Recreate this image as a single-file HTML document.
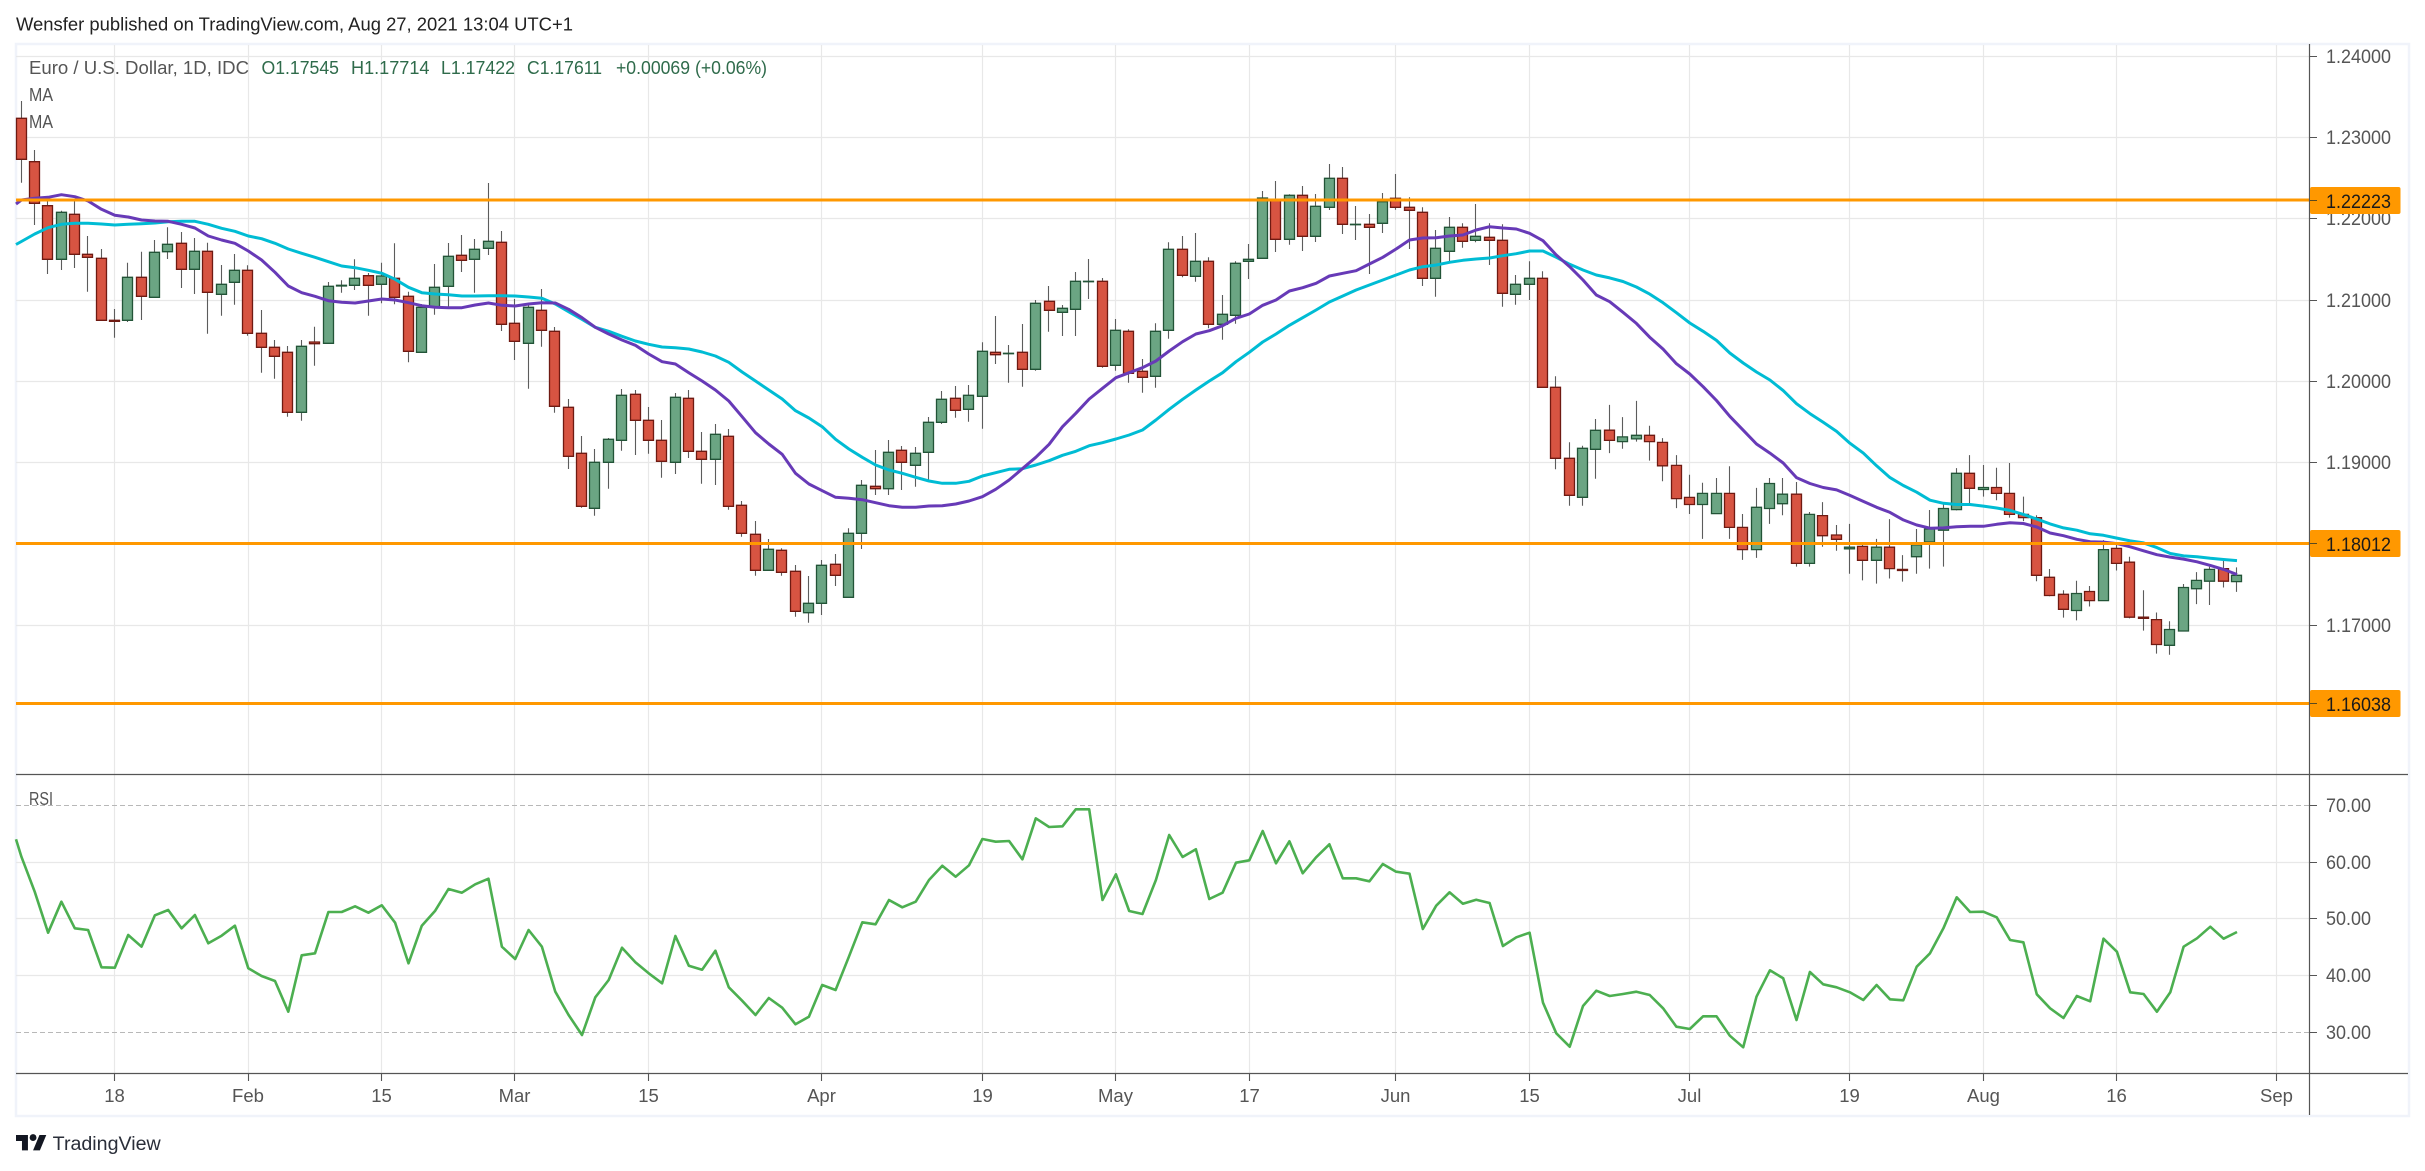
<!DOCTYPE html>
<html lang="en">
<head>
<meta charset="utf-8">
<title>Euro / U.S. Dollar, 1D, IDC</title>
<style>
html,body{margin:0;padding:0;background:#fff;width:2425px;height:1171px;overflow:hidden}
svg{display:block;position:absolute;left:0;top:0}
text{font-family:"Liberation Sans",sans-serif;font-size:18.5px;fill:#555}
.ax{font-size:19px}
.t{font-size:18.5px;text-anchor:middle}
.g{fill:#2f6b4b}
.lb{fill:#1a1a1a;font-size:19px}
</style>
</head>
<body>
<svg width="2425" height="1171" viewBox="0 0 2425 1171" xmlns="http://www.w3.org/2000/svg">
<rect width="2425" height="1171" fill="#fff"/>
<text x="16" y="30.5" textLength="557" lengthAdjust="spacingAndGlyphs" style="fill:#222">Wensfer published on TradingView.com, Aug 27, 2021 13:04 UTC+1</text>

<!-- frame -->
<rect x="16" y="44" width="2393" height="1072" fill="#fff" stroke="#f0f3fa" stroke-width="2.5"/>

<!-- grid -->
<path d="M114.5 45V1073M248.5 45V1073M381.5 45V1073M514.5 45V1073M648.5 45V1073M821.5 45V1073M982.5 45V1073M1115.5 45V1073M1249.5 45V1073M1395.5 45V1073M1529.5 45V1073M1689.5 45V1073M1849.5 45V1073M1983.5 45V1073M2116.5 45V1073M2276.5 45V1073" stroke="#e8e8e8" stroke-width="1.2" fill="none"/>
<path d="M16 56.5H2309M16 137.5H2309M16 218.5H2309M16 300.5H2309M16 381.5H2309M16 462.5H2309M16 625.5H2309M16 862.5H2309M16 918.5H2309M16 975.5H2309" stroke="#e8e8e8" stroke-width="1.2" fill="none"/>
<path d="M16 805.5H2309M16 1032.5H2309" stroke="#b8b8b8" stroke-width="1.1" stroke-dasharray="5 3" fill="none"/>

<!-- wicks -->
<path stroke="#5c5c5c" stroke-width="1.1" fill="none" d="M21.5 101V182.7M34.5 150V225M47.5 197V274M61.5 210.7V270M74.5 200V268M87.5 236V291.7M101.5 249V320.3M114.5 309V337.7M127.5 262.7V322M141.5 251.7V320M154.5 240V297.3M167.5 227.3V259M181.5 232V288M194.5 238V294M207.5 242.7V333.7M221.5 265V315.7M234.5 254V304.7M247.5 265.3V335.7M261.5 310V372.7M274.5 340V378.7M287.5 346V416.7M301.5 340V420.7M314.5 326.7V365.7M328.5 282V343.3M341.5 280.3V292.7M354.5 259.3V290M368.5 273V315.7M381.5 262.7V303.3M394.5 243.3V304.3M408.5 291.7V362.3M421.5 304V352.3M434.5 264V314.7M448.5 243V306.7M461.5 235V272M474.5 239V292.7M488.5 183V255M501.5 231V331M514.5 299V360M528.5 303.3V388.7M541.5 289V346.7M554.5 327V412.7M568.5 399V469M581.5 436V507.7M594.5 449V515.7M608.5 438V488.7M621.5 389V450.7M635.5 390V455M648.5 407V453.7M661.5 420V477.7M675.5 393V474M688.5 390V458M701.5 432V483.7M715.5 424V485M728.5 429V509.7M741.5 501V536.7M755.5 521V575.7M768.5 539V570.3M781.5 548.3V575.7M795.5 565V616.7M808.5 576V622.7M821.5 560V615M835.5 554V586M848.5 528.3V597.3M861.5 480V549M875.5 450V495M888.5 440V495M901.5 446V490M915.5 447V486.7M928.5 417V480M941.5 391V424M955.5 386V417.7M968.5 385V421.7M982.5 342.3V428.7M995.5 316V364M1008.5 345V382.7M1022.5 324V386.7M1035.5 300V370.7M1048.5 286V331.7M1062.5 305V336M1075.5 272V336M1088.5 259V299M1102.5 278V367.7M1115.5 319V370.7M1128.5 329.3V382.7M1142.5 359V392.7M1155.5 323.3V387.7M1168.5 242.3V338.7M1182.5 236V277.3M1195.5 233V281.7M1208.5 257.3V328.3M1222.5 295V339.7M1235.5 261.3V323.7M1248.5 244V279M1262.5 191V258.3M1275.5 181V252M1289.5 194.3V244.7M1302.5 186V251M1315.5 194V242M1329.5 164V210M1342.5 167V234M1355.5 206V240M1369.5 214V274M1382.5 193V233M1395.5 174V209.7M1409.5 197.3V249M1422.5 207.3V286M1435.5 230V296.7M1449.5 217V261.7M1462.5 223.3V247.7M1475.5 204V242.3M1489.5 223.3V265M1502.5 224.3V306.7M1515.5 275V304.7M1529.5 261.3V300M1542.5 271.3V387.3M1555.5 376.3V469.3M1569.5 442.3V505.7M1582.5 445.7V505.7M1595.5 419V478.7M1609.5 404.9V453.1M1622.5 417.1V448.8M1636.5 400.9V441.6M1649.5 425.8V460.6M1662.5 438.1V481.2M1676.5 455.1V508.1M1689.5 474.8V514M1702.5 482.8V538.9M1716.5 478V513.6M1729.5 466.2V538.9M1742.5 514V559.9M1756.5 487.9V557.9M1769.5 478V523.9M1782.5 478V515.2M1796.5 482V566.6M1809.5 512V566.6M1822.5 502.1V546.8M1836.5 525V550.8M1849.5 523.9V573.7M1862.5 542V580.4M1876.5 538.9V583.6M1889.5 519.1V578.5M1902.5 555.1V581.6M1916.5 529V573.7M1929.5 510V568.6M1943.5 503.3V566.6M1956.5 468.1V510.4M1969.5 455.1V503.3M1983.5 465V496.6M1996.5 467.7V500.2M2009.5 463V517.6M2023.5 496.6V521.1M2036.5 515.2V581.2M2049.5 569V596.2M2063.5 590.3V617.6M2076.5 580.8V620.4M2089.5 586V606.5M2103.5 540.1V600.6M2116.5 544.8V570.5M2129.5 556.7V618.4M2143.5 590.3V630.6M2156.5 612.5V653.6M2169.5 621.2V654.8M2183.5 584V631M2196.5 572.1V604.1M2209.5 566.6V605M2223.5 561V587.5M2236.5 567.4V591.9"/>

<!-- green bodies -->
<path fill="#6ba583" stroke="#225437" stroke-width="1.3" d="M56.5 212.3h10V259.3h-10zM122.5 277.3h10V320.3h-10zM149.5 252.3h10V297.3h-10zM162.5 244.3h10V251.7h-10zM189.5 251.3h10V269.3h-10zM216.5 284.3h10V294.3h-10zM229.5 270.3h10V282.3h-10zM296.5 346.3h10V412.3h-10zM323.5 286.3h10V343.3h-10zM336.5 285.3h10V286h-10zM349.5 278.3h10V285.3h-10zM376.5 276h10V284.3h-10zM416.5 307.3h10V352.3h-10zM429.5 287.3h10V307.3h-10zM443.5 256.3h10V286.3h-10zM469.5 249.3h10V259.3h-10zM483.5 241.3h10V248.3h-10zM523.5 307.3h10V343.3h-10zM589.5 462.3h10V508.3h-10zM603.5 439.3h10V462.3h-10zM616.5 395.3h10V440.3h-10zM670.5 397.3h10V462.3h-10zM710.5 434.3h10V459.3h-10zM763.5 549.3h10V570.3h-10zM803.5 603.3h10V612.7h-10zM816.5 565.3h10V603.3h-10zM843.5 533.3h10V597.3h-10zM856.5 485.3h10V533.3h-10zM883.5 452.3h10V488.7h-10zM910.5 453.3h10V465.3h-10zM923.5 422.3h10V452.3h-10zM936.5 399.3h10V422.3h-10zM963.5 395.3h10V409.3h-10zM977.5 351.3h10V396.3h-10zM1003.5 353.3h10V353.7h-10zM1030.5 303.3h10V369.3h-10zM1057.5 308.3h10V312.3h-10zM1070.5 281.3h10V309.3h-10zM1083.5 281.3h10V281.7h-10zM1110.5 330.3h10V365.3h-10zM1150.5 331.3h10V376.3h-10zM1163.5 249.3h10V330.3h-10zM1190.5 261.3h10V276.3h-10zM1217.5 314.3h10V324.3h-10zM1230.5 263.3h10V315.3h-10zM1243.5 259.3h10V261.3h-10zM1257.5 198h10V258.3h-10zM1284.5 195.3h10V239.3h-10zM1310.5 206.3h10V236.3h-10zM1324.5 178.3h10V207.3h-10zM1350.5 224.3h10V224.7h-10zM1377.5 201.7h10V223.3h-10zM1430.5 248.3h10V278.3h-10zM1444.5 227.3h10V251.3h-10zM1470.5 236.3h10V240.3h-10zM1510.5 284.3h10V294.3h-10zM1524.5 278.3h10V284.3h-10zM1577.5 448.3h10V497.3h-10zM1590.5 430.3h10V449.3h-10zM1617.5 436.9h10V441.6h-10zM1631.5 435.3h10V438.9h-10zM1697.5 493.4h10V504.5h-10zM1711.5 493.4h10V513.6h-10zM1751.5 507.3h10V549.6h-10zM1764.5 483.5h10V508.5h-10zM1777.5 494.2h10V503.7h-10zM1804.5 514.4h10V563.4h-10zM1844.5 547.2h10V548.8h-10zM1871.5 547.2h10V560.3h-10zM1911.5 544.8h10V556.7h-10zM1924.5 529h10V542h-10zM1938.5 508.5h10V530.2h-10zM1951.5 473.3h10V509.6h-10zM1978.5 487.5h10V489.5h-10zM2071.5 593.5h10V610.5h-10zM2098.5 549.6h10V600.6h-10zM2164.5 629.5h10V645.3h-10zM2178.5 587.5h10V631h-10zM2191.5 580.4h10V588.7h-10zM2204.5 569.4h10V581.2h-10zM2231.5 575.3h10V581.6h-10z"/>

<!-- red bodies -->
<path fill="#d75442" stroke="#6f1a12" stroke-width="1.3" d="M16.5 118.3h10V159.3h-10zM29.5 161.7h10V203.3h-10zM42.5 205.7h10V259.3h-10zM69.5 214.3h10V254.3h-10zM82.5 254.3h10V257.3h-10zM96.5 258.3h10V320.3h-10zM109.5 320.3h10V321.3h-10zM136.5 277.3h10V296.3h-10zM176.5 243.3h10V269.3h-10zM202.5 251.3h10V292.3h-10zM242.5 270.3h10V333.3h-10zM256.5 333.3h10V347.3h-10zM269.5 347.3h10V356.3h-10zM282.5 352.3h10V412.3h-10zM309.5 342h10V343.7h-10zM363.5 275.7h10V285.3h-10zM389.5 278.3h10V297.3h-10zM403.5 296.3h10V351.3h-10zM456.5 255.3h10V260.3h-10zM496.5 242.3h10V324.3h-10zM509.5 323.3h10V341.3h-10zM536.5 310.3h10V330.3h-10zM549.5 331.3h10V406.3h-10zM563.5 407.3h10V456.3h-10zM576.5 453.3h10V506.3h-10zM630.5 394.3h10V420.3h-10zM643.5 420.3h10V440.3h-10zM656.5 440.3h10V461.3h-10zM683.5 398.3h10V451.3h-10zM696.5 451.3h10V459.3h-10zM723.5 436.3h10V506.3h-10zM736.5 505.3h10V533.3h-10zM750.5 534.3h10V570.3h-10zM776.5 550.3h10V572.3h-10zM790.5 571.3h10V611.3h-10zM830.5 564.3h10V575.3h-10zM870.5 486.3h10V488.7h-10zM896.5 450.3h10V462.3h-10zM950.5 398.3h10V410.3h-10zM990.5 352.3h10V354.7h-10zM1017.5 352.3h10V369.3h-10zM1044.5 301.3h10V310.3h-10zM1097.5 281.3h10V366.3h-10zM1123.5 331.3h10V373.3h-10zM1137.5 371.3h10V377.3h-10zM1177.5 249.3h10V275.3h-10zM1203.5 261.3h10V324.3h-10zM1270.5 200h10V239.3h-10zM1297.5 195.3h10V236.3h-10zM1337.5 178.3h10V224.3h-10zM1364.5 224.3h10V227.3h-10zM1390.5 198.3h10V207.3h-10zM1404.5 207.3h10V210.3h-10zM1417.5 212.3h10V278.3h-10zM1457.5 227.3h10V241.3h-10zM1484.5 237.3h10V240.3h-10zM1497.5 240.3h10V293.3h-10zM1537.5 278.3h10V387.3h-10zM1550.5 387.3h10V458.3h-10zM1564.5 458.3h10V495.3h-10zM1604.5 430.2h10V440.4h-10zM1644.5 435.3h10V441.6h-10zM1657.5 442.4h10V465.8h-10zM1671.5 465.4h10V498.6h-10zM1684.5 497.4h10V504.5h-10zM1724.5 493.4h10V527.4h-10zM1737.5 527.4h10V549.6h-10zM1791.5 494.2h10V563.4h-10zM1817.5 515.6h10V535.7h-10zM1831.5 535h10V539.3h-10zM1857.5 546.4h10V560.3h-10zM1884.5 547.2h10V568.6h-10zM1897.5 569.4h10V570.5h-10zM1964.5 473.3h10V488.3h-10zM1991.5 487.5h10V493.4h-10zM2004.5 493.4h10V514.4h-10zM2018.5 514.4h10V517.6h-10zM2031.5 517.6h10V575.3h-10zM2044.5 577.3h10V595.5h-10zM2058.5 594.3h10V609.3h-10zM2084.5 591.5h10V600.6h-10zM2111.5 548.4h10V563.4h-10zM2124.5 562.2h10V617.2h-10zM2138.5 617.2h10V618.4h-10zM2151.5 619.6h10V644.5h-10zM2218.5 568.6h10V581.2h-10z"/>

<!-- MA cyan -->
<polyline fill="none" stroke="#00bcd4" stroke-width="3" stroke-linejoin="round" points="16,244.5 21.4,241.5 34.7,234 48.1,227.7 61.4,224.3 74.8,223.3 88.1,223.3 101.5,224 114.8,225 128.2,224.3 141.5,223.7 154.9,223 168.2,221.7 181.6,221.3 194.9,221.3 208.3,224.3 221.6,228.3 234.9,231.3 248.3,236 261.6,238.7 275,243.3 288.3,249 301.7,253.3 315,257.3 328.4,261.7 341.7,266 355.1,267.7 368.4,270.3 381.8,273.3 395.1,279.3 408.5,287.3 421.8,292.7 435.2,294 448.5,294.7 461.9,296 475.2,296 488.5,295.7 501.9,295.7 515.2,296 528.6,297 541.9,298.3 555.3,304 568.6,311.7 582,319.3 595.3,327.3 608.7,331.3 622,336.3 635.4,341 648.7,344.3 662.1,347 675.4,347.7 688.8,349 702.1,352 715.4,356 728.8,362.3 742.1,372 755.5,381 768.8,390 782.2,399 795.5,410.7 808.9,418 822.2,426.7 835.6,439.3 848.9,449 862.3,457.3 875.6,465 889,470 902.3,473.3 915.7,477.3 929,481 942.3,483.3 955.7,483.3 969,481.3 982.4,476 995.7,472.7 1009.1,469.3 1022.4,468.7 1035.8,465 1049.1,460.7 1062.5,455.3 1075.8,451.3 1089.2,445.7 1102.5,442.7 1115.9,439 1129.2,435 1142.5,430 1155.9,420 1169.2,409.3 1182.6,399.3 1195.9,390 1209.3,381 1222.6,372.7 1236,361.7 1249.3,352.3 1262.7,342 1276,334 1289.4,325.3 1302.7,317.7 1316.1,310 1329.4,302 1342.8,296 1356.1,290 1369.4,285 1382.8,280 1396.1,275 1409.5,270 1422.8,266.7 1436.2,265 1449.5,262.3 1462.9,260.3 1476.2,259 1489.6,258 1502.9,255.7 1516.3,253.7 1529.6,251 1543,251 1556.3,257.3 1569.7,264.3 1583,270 1596.3,275 1609.7,277.9 1623,281.5 1636.4,287 1649.7,294.1 1663.1,302.8 1676.4,312.7 1689.8,323 1703.1,331.3 1716.5,340.4 1729.8,353 1743.2,363 1756.5,372 1769.9,380 1783.2,390.6 1796.5,403.7 1809.9,413.6 1823.2,422.3 1836.6,431.4 1849.9,443.2 1863.3,453.1 1876.6,465.8 1890,477.6 1903.3,485.5 1916.7,492.2 1930,500.2 1943.4,503.3 1956.7,504.5 1970.1,504.5 1983.4,506.1 1996.7,508 2010.1,510.4 2023.4,514.4 2036.8,519.1 2050.1,523.9 2063.5,527.9 2076.8,530.2 2090.2,533.8 2103.5,535.3 2116.9,538.1 2130.2,540.9 2143.6,542.9 2156.9,547.6 2170.3,553.5 2183.6,555.9 2197,556.7 2210.3,558.3 2223.6,559.5 2237,560.6"/>

<!-- MA purple -->
<polyline fill="none" stroke="#673ab7" stroke-width="3" stroke-linejoin="round" points="16,204 21.4,200 34.7,198.3 48.1,197.3 61.4,194.7 74.8,196.7 88.1,201 101.5,209.3 114.8,215.3 128.2,217 141.5,220 154.9,221 168.2,221.3 181.6,224.3 194.9,228 208.3,236 221.6,240 234.9,243.3 248.3,251 261.6,260 275,272.3 288.3,286 301.7,292.7 315,296.3 328.4,300.7 341.7,302.3 355.1,303 368.4,301 381.8,299 395.1,300 408.5,302.7 421.8,305.7 435.2,307.3 448.5,307.7 461.9,307.7 475.2,305 488.5,303 501.9,305.3 515.2,306 528.6,304 541.9,302.7 555.3,303 568.6,309.3 582,317.7 595.3,327.3 608.7,334 622,340 635.4,345.3 648.7,354 662.1,361.7 675.4,364 688.8,372.7 702.1,381 715.4,390 728.8,401 742.1,416.7 755.5,432.7 768.8,444 782.2,454.3 795.5,473.3 808.9,484 822.2,490.7 835.6,497.3 848.9,498.3 862.3,499.7 875.6,502.7 889,505.7 902.3,507.3 915.7,507.3 929,506 942.3,505.7 955.7,504 969,501 982.4,496.7 995.7,489.3 1009.1,480 1022.4,468.7 1035.8,457.3 1049.1,444.3 1062.5,426.7 1075.8,413.3 1089.2,399 1102.5,388.3 1115.9,377.7 1129.2,372.7 1142.5,367.7 1155.9,361 1169.2,351 1182.6,341.7 1195.9,334 1209.3,330.7 1222.6,325.7 1236,318.3 1249.3,314 1262.7,305.3 1276,300 1289.4,291 1302.7,287.7 1316.1,283.3 1329.4,276 1342.8,273.3 1356.1,270.7 1369.4,264 1382.8,257.3 1396.1,249 1409.5,240 1422.8,238 1436.2,237.7 1449.5,236 1462.9,235 1476.2,230 1489.6,226.7 1502.9,228 1516.3,229 1529.6,233.3 1543,240.7 1556.3,255 1569.7,266.7 1583,280 1596.3,295 1609.7,301.7 1623,312.3 1636.4,323.4 1649.7,337.2 1663.1,349.1 1676.4,363.7 1689.8,374 1703.1,386.7 1716.5,400.5 1729.8,416.3 1743.2,430.2 1756.5,444 1769.9,453.1 1783.2,463 1796.5,477.6 1809.9,483.5 1823.2,487.5 1836.6,489.9 1849.9,495.4 1863.3,501.4 1876.6,507.3 1890,512.4 1903.3,519.9 1916.7,525 1930,528.2 1943.4,527.9 1956.7,526.7 1970.1,526.3 1983.4,526.3 1996.7,524.3 2010.1,522.7 2023.4,523.5 2036.8,527 2050.1,533 2063.5,535.7 2076.8,539.3 2090.2,541.7 2103.5,542.1 2116.9,543.6 2130.2,546.8 2143.6,550.8 2156.9,554.7 2170.3,557.1 2183.6,559.1 2197,561.8 2210.3,565.4 2223.6,569.4 2237,574.5"/>

<!-- RSI -->
<polyline fill="none" stroke="#4caf50" stroke-width="2.6" stroke-linejoin="round" points="16,839.3 21.4,856.7 34.7,891.7 48.1,932.7 61.4,901.7 74.8,928.3 88.1,930 101.5,967.3 114.8,967.7 128.2,935 141.5,946.7 154.9,915.3 168.2,910 181.6,928.3 194.9,915 208.3,943.3 221.6,935.7 234.9,925.7 248.3,968.3 261.6,976 275,981 288.3,1011.7 301.7,955.3 315,953.3 328.4,912 341.7,912 355.1,906.3 368.4,912.7 381.8,905.3 395.1,922.7 408.5,963.3 421.8,925.7 435.2,910.7 448.5,889 461.9,892.7 475.2,884.3 488.5,878.7 501.9,946.7 515.2,959 528.6,930 541.9,946.7 555.3,991.7 568.6,1015 582,1035 595.3,997.3 608.7,980 622,947.7 635.4,962.3 648.7,973.3 662.1,983.3 675.4,936 688.8,965.7 702.1,969.7 715.4,950.7 728.8,987.3 742.1,1000.7 755.5,1015 768.8,998 782.2,1007.7 795.5,1024.3 808.9,1016.7 822.2,985 835.6,990 848.9,956.7 862.3,922.3 875.6,924.3 889,900 902.3,907.3 915.7,901.7 929,880 942.3,865.7 955.7,876.7 969,865.3 982.4,839 995.7,841.7 1009.1,841 1022.4,859.3 1035.8,818.3 1049.1,827 1062.5,826.3 1075.8,809.3 1089.2,809.3 1102.5,900 1115.9,874.3 1129.2,911 1142.5,914 1155.9,880 1169.2,835 1182.6,857 1195.9,849.3 1209.3,899 1222.6,892.7 1236,862.7 1249.3,860.3 1262.7,831 1276,863.3 1289.4,841.3 1302.7,873.3 1316.1,857.3 1329.4,844.3 1342.8,878.3 1356.1,878.3 1369.4,881.3 1382.8,864 1396.1,871.7 1409.5,873.7 1422.8,929 1436.2,905.7 1449.5,892.3 1462.9,903.7 1476.2,899.7 1489.6,903 1502.9,946 1516.3,937.3 1529.6,932.7 1543,1002.7 1556.3,1033.3 1569.7,1046.7 1583,1006 1596.3,990.7 1609.7,996 1623,994 1636.4,991.7 1649.7,995 1663.1,1008.3 1676.4,1026.7 1689.8,1029 1703.1,1016.3 1716.5,1016.3 1729.8,1035.7 1743.2,1047.3 1756.5,996.7 1769.9,970.3 1783.2,978.3 1796.5,1020 1809.9,972 1823.2,984.3 1836.6,987.3 1849.9,992.3 1863.3,1000 1876.6,985 1890,999.3 1903.3,1000.3 1916.7,966.7 1930,953.3 1943.4,928.3 1956.7,897.3 1970.1,912 1983.4,911.7 1996.7,917.3 2010.1,940 2023.4,942.3 2036.8,994.3 2050.1,1008.3 2063.5,1018 2076.8,996 2090.2,1001.3 2103.5,938.7 2116.9,951.7 2130.2,992.3 2143.6,994 2156.9,1011.7 2170.3,992.3 2183.6,946.7 2197,938.3 2210.3,926.7 2223.6,938.7 2237,932"/>

<!-- horizontal levels -->
<path d="M16 200H2309M16 543.5H2309M16 703.5H2309" stroke="#ff9800" stroke-width="3" fill="none"/>

<!-- separators and axes -->
<path d="M16 774.5H2408M16 1073.5H2408M2309.5 44V1115" stroke="#555" stroke-width="1.2" fill="none"/>
<path d="M2310 56.5h7M2310 137.5h7M2310 218.5h7M2310 300.5h7M2310 381.5h7M2310 462.5h7M2310 625.5h7M2310 805.5h7M2310 862.5h7M2310 918.5h7M2310 975.5h7M2310 1032.5h7M114.5 1074v7M248.5 1074v7M381.5 1074v7M514.5 1074v7M648.5 1074v7M821.5 1074v7M982.5 1074v7M1115.5 1074v7M1249.5 1074v7M1395.5 1074v7M1529.5 1074v7M1689.5 1074v7M1849.5 1074v7M1983.5 1074v7M2116.5 1074v7M2276.5 1074v7" stroke="#555" stroke-width="1.1" fill="none"/>

<!-- legend -->
<text x="29" y="74" textLength="220" lengthAdjust="spacingAndGlyphs">Euro / U.S. Dollar, 1D, IDC</text>
<text class="g" x="261.5" y="74" textLength="77.5" lengthAdjust="spacingAndGlyphs">O1.17545</text>
<text class="g" x="351" y="74" textLength="78.5" lengthAdjust="spacingAndGlyphs">H1.17714</text>
<text class="g" x="441" y="74" textLength="74" lengthAdjust="spacingAndGlyphs">L1.17422</text>
<text class="g" x="527" y="74" textLength="75" lengthAdjust="spacingAndGlyphs">C1.17611</text>
<text class="g" x="616" y="74" textLength="151" lengthAdjust="spacingAndGlyphs">+0.00069 (+0.06%)</text>
<text x="29" y="101" textLength="24" lengthAdjust="spacingAndGlyphs">MA</text>
<text x="29" y="128" textLength="24" lengthAdjust="spacingAndGlyphs">MA</text>
<text x="29" y="805" textLength="24" lengthAdjust="spacingAndGlyphs">RSI</text>

<!-- price scale -->
<g class="ax">
<text class="ax" x="2326" y="63" textLength="65" lengthAdjust="spacingAndGlyphs">1.24000</text>
<text class="ax" x="2326" y="144" textLength="65" lengthAdjust="spacingAndGlyphs">1.23000</text>
<text class="ax" x="2326" y="225" textLength="65" lengthAdjust="spacingAndGlyphs">1.22000</text>
<text class="ax" x="2326" y="307" textLength="65" lengthAdjust="spacingAndGlyphs">1.21000</text>
<text class="ax" x="2326" y="388" textLength="65" lengthAdjust="spacingAndGlyphs">1.20000</text>
<text class="ax" x="2326" y="469" textLength="65" lengthAdjust="spacingAndGlyphs">1.19000</text>
<text class="ax" x="2326" y="632" textLength="65" lengthAdjust="spacingAndGlyphs">1.17000</text>
<text class="ax" x="2326" y="812" textLength="45" lengthAdjust="spacingAndGlyphs">70.00</text>
<text class="ax" x="2326" y="869" textLength="45" lengthAdjust="spacingAndGlyphs">60.00</text>
<text class="ax" x="2326" y="925" textLength="45" lengthAdjust="spacingAndGlyphs">50.00</text>
<text class="ax" x="2326" y="982" textLength="45" lengthAdjust="spacingAndGlyphs">40.00</text>
<text class="ax" x="2326" y="1039" textLength="45" lengthAdjust="spacingAndGlyphs">30.00</text>
</g>

<!-- price labels -->
<rect x="2310" y="187" width="90.5" height="27" rx="2" fill="#ff9800"/>
<rect x="2310" y="530" width="90.5" height="27" rx="2" fill="#ff9800"/>
<rect x="2310" y="690" width="90.5" height="27" rx="2" fill="#ff9800"/>
<path d="M2310 200.5h7M2310 543.5h7M2310 703.5h7" stroke="#5a4a20" stroke-width="1.1" fill="none"/>
<text class="lb" x="2326" y="208" textLength="65" lengthAdjust="spacingAndGlyphs">1.22223</text>
<text class="lb" x="2326" y="551" textLength="65" lengthAdjust="spacingAndGlyphs">1.18012</text>
<text class="lb" x="2326" y="711" textLength="65" lengthAdjust="spacingAndGlyphs">1.16038</text>

<!-- time scale -->
<text class="t" x="114.5" y="1102">18</text>
<text class="t" x="248" y="1102">Feb</text>
<text class="t" x="381.5" y="1102">15</text>
<text class="t" x="514.5" y="1102">Mar</text>
<text class="t" x="648.5" y="1102">15</text>
<text class="t" x="821.5" y="1102">Apr</text>
<text class="t" x="982.5" y="1102">19</text>
<text class="t" x="1115.5" y="1102">May</text>
<text class="t" x="1249.5" y="1102">17</text>
<text class="t" x="1395.5" y="1102">Jun</text>
<text class="t" x="1529.5" y="1102">15</text>
<text class="t" x="1689.5" y="1102">Jul</text>
<text class="t" x="1849.5" y="1102">19</text>
<text class="t" x="1983.5" y="1102">Aug</text>
<text class="t" x="2116.5" y="1102">16</text>
<text class="t" x="2276.5" y="1102">Sep</text>

<!-- logo -->
<g transform="translate(16 1131.6) scale(.853)" fill="#131722">
<path d="M14 22H7V11H0V4h14v18ZM28 22h-8l7.5-18h8L28 22Z"/>
<circle cx="20" cy="7" r="4"/>
</g>
<text x="52.7" y="1150" textLength="108" lengthAdjust="spacingAndGlyphs" style="fill:#2a2e39;font-size:19px">TradingView</text>
</svg>
</body>
</html>
